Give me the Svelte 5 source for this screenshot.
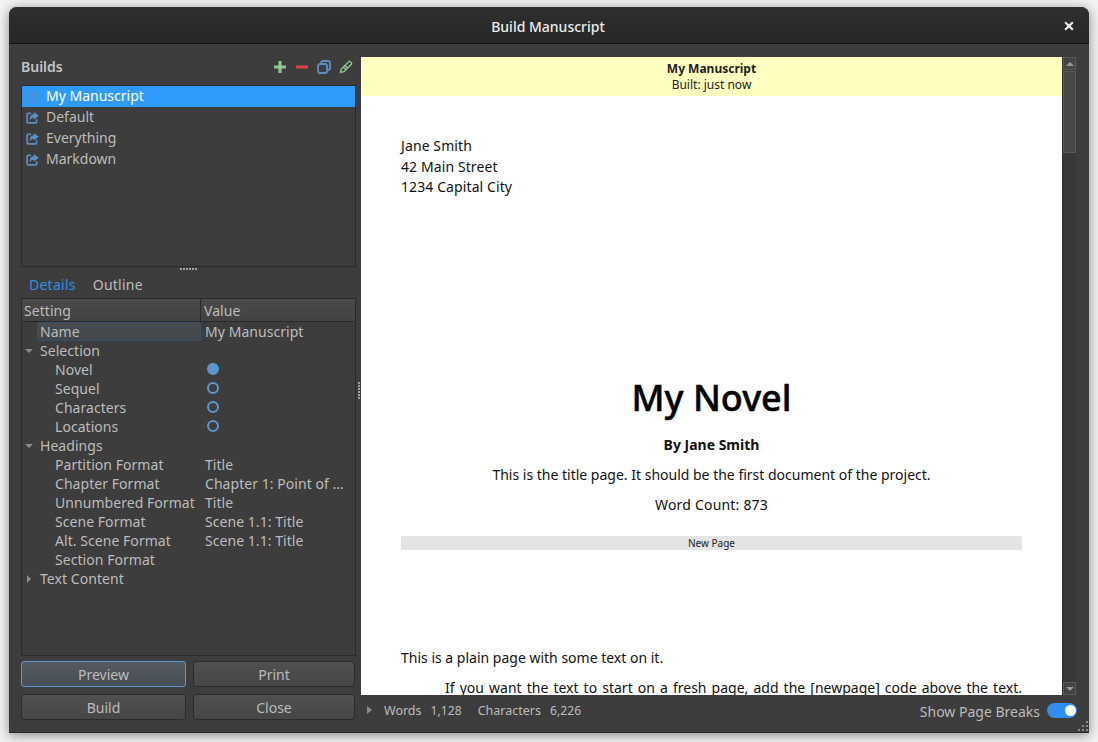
<script>
  let builds = ['My Manuscript', 'Default', 'Everything', 'Markdown'];
  let selected = 'My Manuscript';

  let settings = [
    { kind: 'name', label: 'Name', value: 'My Manuscript' },
    { kind: 'open', label: 'Selection' },
    { kind: 'radio', label: 'Novel', on: true },
    { kind: 'radio', label: 'Sequel' },
    { kind: 'radio', label: 'Characters' },
    { kind: 'radio', label: 'Locations' },
    { kind: 'open', label: 'Headings' },
    { kind: 'value', label: 'Partition Format', value: 'Title' },
    { kind: 'value', label: 'Chapter Format', value: 'Chapter 1: Point of …' },
    { kind: 'value', label: 'Unnumbered Format', value: 'Title' },
    { kind: 'value', label: 'Scene Format', value: 'Scene 1.1: Title' },
    { kind: 'value', label: 'Alt. Scene Format', value: 'Scene 1.1: Title' },
    { kind: 'value', label: 'Section Format', value: '' },
    { kind: 'closed', label: 'Text Content' }
  ];
</script>

<div class="window">
  <header class="titlebar">
    <span class="title">Build Manuscript</span>
    <svg class="close" width="10" height="10" viewBox="0 0 10 10" aria-label="Close">
      <path d="M1.2 1.2 8.8 8.8M8.8 1.2 1.2 8.8" stroke="#f0f0f0" stroke-width="2.2" fill="none" />
    </svg>
  </header>

  <div class="content">
    <aside class="left">
      <div class="builds-head">
        <span class="builds-title">Builds</span>
        <div class="tools">
          <svg width="14" height="14" viewBox="0 0 14 14"><path d="M7 1v12M1 7h12" stroke="#93c98f" stroke-width="3" fill="none" /></svg>
          <svg width="14" height="14" viewBox="0 0 14 14"><path d="M1 7h12" stroke="#d9434a" stroke-width="3" fill="none" /></svg>
          <svg width="14" height="14" viewBox="0 0 14 14" fill="none" stroke="#5a8fc4" stroke-width="1.8">
            <rect x="1" y="4" width="9" height="9" rx="2" />
            <path d="M4 3.6V2.8A1.800 1.800 0 0 1 5.800 1h5.400A1.800 1.800 0 0 1 13 2.800v5.400A1.800 1.800 0 0 1 11.200 10h-1" />
          </svg>
          <svg width="14" height="14" viewBox="0 0 14 14" fill="none" stroke="#93c98f" stroke-width="1.300">
            <path d="M1.500 12.500 2.300 9 9.800 1.600a1 1 0 0 1 1.400 0l1.200 1.200a1 1 0 0 1 0 1.400L5 11.700Z" />
            <path d="M4.300 7 7 9.700M6 5.300 8.700 8" />
          </svg>
        </div>
      </div>

      <ul class="build-list">
        {#each builds as build}
          <li class:sel={build === selected}>
            <svg class="build-icon" width="13" height="13" viewBox="0 0 14 14">
              <path d="M5.500 2.500H2.200a1 1 0 0 0-1 1v8.300a1 1 0 0 0 1 1h8.300a1 1 0 0 0 1-1V9" fill="none" stroke="currentColor" stroke-width="1.800" />
              <path d="M8.500 1 13.800 5.200 8.500 9.400V7.200C6.500 7.200 5 8 3.800 10.500 3.800 6.500 5.500 3.500 8.500 3.200Z" fill="currentColor" />
            </svg>
            <span class="build-name">{build}</span>
          </li>
        {/each}
      </ul>

      <div class="hsplit"></div>

      <div class="tabs">
        <span class="tab active">Details</span>
        <span class="tab">Outline</span>
      </div>

      <div class="tree">
        <div class="tree-head">
          <span class="col-a">Setting</span>
          <span class="col-b">Value</span>
        </div>
        {#each settings as row}
          <div class="row">
            {#if row.kind === 'name'}
              <span class="name-cell">{row.label}</span>
              <span class="val">{row.value}</span>
            {:else if row.kind === 'open' || row.kind === 'closed'}
              <span class="arrow {row.kind}"></span>
              <span class="group">{row.label}</span>
            {:else}
              <span class="leaf">{row.label}</span>
              {#if row.kind === 'radio'}
                <span class="radio" class:on={row.on}></span>
              {:else}
                <span class="val">{row.value}</span>
              {/if}
            {/if}
          </div>
        {/each}
      </div>

      <div class="buttons">
        <button class="focus">Preview</button>
        <button>Print</button>
        <button>Build</button>
        <button>Close</button>
      </div>
    </aside>

    <div class="vsplit"></div>

    <main class="right">
      <div class="viewer">
        <div class="page">
          <div class="banner">
            <b>My Manuscript</b>
            <span>Built: just now</span>
          </div>
          <div class="doc">
            <p class="address">Jane Smith<br />42 Main Street<br />1234 Capital City</p>
            <h1>My Novel</h1>
            <p class="center author">By Jane Smith</p>
            <p class="center intro">This is the title page. It should be the first document of the project.</p>
            <p class="center count">Word Count: 873</p>
            <div class="newpage">New Page</div>
            <p class="plain">This is a plain page with some text on it.</p>
            <p class="indented">If you want the text to start on a fresh page, add the [newpage] code above the text.</p>
          </div>
        </div>
        <div class="scrollbar">
          <div class="sb-btn"><span class="up"></span></div>
          <div class="sb-track"><div class="sb-thumb"></div></div>
          <div class="sb-btn"><span class="down"></span></div>
        </div>
      </div>

      <footer class="status">
        <span class="status-arrow"></span>
        <span class="st-label">Words</span>
        <span class="st-num">1,128</span>
        <span class="st-label second">Characters</span>
        <span class="st-num">6,226</span>
        <span class="breaks">Show Page Breaks</span>
        <span class="switch"><span class="knob"></span></span>
      </footer>
    </main>
  </div>

  <svg class="grip" width="14" height="14" viewBox="0 0 14 14" fill="#8a8a8a">
    <rect x="11" y="2" width="2" height="2" />
    <rect x="7" y="6" width="2" height="2" /><rect x="11" y="6" width="2" height="2" />
    <rect x="3" y="10" width="2" height="2" /><rect x="7" y="10" width="2" height="2" /><rect x="11" y="10" width="2" height="2" />
  </svg>
</div>

<style>
  :global(body) {
    background: #f2f2f2;
    font-family: "Noto Sans", sans-serif;
    overflow: hidden;
    height: 742px;
  }

  .window {
    position: relative;
    box-sizing: border-box;
    width: 1080px;
    height: 726px;
    margin: 7px 0 0 9px;
    border-radius: 8px 8px 0 0;
    background: #3d3d3d;
    box-shadow: 0 2px 12px rgba(0, 0, 0, 0.45), inset 0 -1px #2a2a2a;
    display: flex;
    flex-direction: column;
    color: #bcbcbc;
    font-size: 14px;
  }

  .titlebar {
    height: 37px;
    flex: none;
    box-sizing: border-box;
    padding: 2px 2px 0 0;
    border-radius: 8px 8px 0 0;
    border-bottom: 1px solid #111;
    background: linear-gradient(#2f2f2f, #272727);
    display: flex;
    align-items: center;
    justify-content: center;
    position: relative;
  }
  .title {
    color: #ececec;
    font-size: 14px;
    font-weight: 500;
  }
  .close {
    position: absolute;
    right: 15px;
    top: 14px;
  }

  .content {
    flex: 1;
    display: flex;
    min-height: 0;
    padding-left: 12px;
    padding-right: 12px;
  }

  .left {
    width: 335px;
    flex: none;
    display: flex;
    flex-direction: column;
  }

  .builds-head {
    height: 41px;
    flex: none;
    box-sizing: border-box;
    padding-top: 3px;
    display: flex;
    align-items: center;
    justify-content: space-between;
  }
  .builds-title {
    font-weight: 600;
    font-size: 14px;
    color: #c4c4c4;
  }
  .tools {
    display: flex;
    gap: 8px;
    padding-right: 3px;
    padding-top: 1px;
  }

  .build-list {
    list-style: none;
    margin: 0;
    padding: 0;
    height: 182px;
    flex: none;
    box-sizing: border-box;
    border: 1px solid #2a2a2a;
  }
  .build-list li {
    height: 21px;
    display: flex;
    align-items: center;
    gap: 7px;
    padding-left: 4px;
    color: #bcbcbc;
  }
  .build-list li.sel {
    background: #2e9afa;
    color: #fff;
  }
  .build-name {
    padding-bottom: 2px;
  }
  .build-icon {
    color: #5a8fc4;
    flex: none;
    margin-bottom: 1px;
  }
  .sel .build-icon {
    color: #4d8fd0;
  }

  .hsplit {
    height: 2px;
    width: 17px;
    flex: none;
    margin: 1px 0 4px;
    align-self: center;
    background-image: linear-gradient(90deg, #a0a0a0 2px, transparent 2px);
    background-size: 3px 2px;
  }

  .tabs {
    height: 24px;
    flex: none;
    box-sizing: border-box;
    padding: 0 0 4px 8px;
    display: flex;
    align-items: center;
    gap: 17px;
    letter-spacing: 0.25px;
  }
  .tab.active {
    color: #2e8fe6;
  }

  .tree {
    height: 358px;
    flex: none;
    box-sizing: border-box;
    border: 1px solid #2a2a2a;
    display: flex;
    flex-direction: column;
    letter-spacing: 0.05px;
  }
  .tree-head {
    height: 23px;
    flex: none;
    box-sizing: border-box;
    display: flex;
    background: linear-gradient(#4a4a4a, #424242);
    border-bottom: 1px solid #2a2a2a;
    line-height: 23px;
  }
  .col-a {
    width: 179px;
    flex: none;
    box-sizing: border-box;
    padding-left: 2px;
    border-right: 1px solid #2a2a2a;
  }
  .col-b {
    padding-left: 3px;
  }

  .row {
    height: 19px;
    flex: none;
    display: flex;
    align-items: center;
    white-space: nowrap;
  }
  .name-cell {
    width: 164px;
    height: 19px;
    margin-left: 15px;
    flex: none;
    box-sizing: border-box;
    padding-left: 2px;
    line-height: 18px;
    border: 1px solid #35506b;
    border-radius: 2px;
    background: linear-gradient(#4a4d50, #40464c);
  }
  .val {
    padding-left: 4px;
  }
  .arrow {
    width: 0;
    height: 0;
    flex: none;
    margin-left: 3px;
  }
  .arrow.open {
    border-left: 4px solid transparent;
    border-right: 4px solid transparent;
    border-top: 4px solid #8c8c8c;
    margin-right: 7px;
  }
  .arrow.closed {
    border-top: 4px solid transparent;
    border-bottom: 4px solid transparent;
    border-left: 4px solid #8c8c8c;
    margin-left: 5px;
    margin-right: 9px;
  }
  .leaf {
    width: 179px;
    flex: none;
    box-sizing: border-box;
    padding-left: 33px;
  }
  .radio {
    width: 12px;
    height: 12px;
    box-sizing: border-box;
    margin: 0 0 2px 6px;
    border: 2px solid #5b98d2;
    border-radius: 50%;
  }
  .radio.on {
    background: #5b98d2;
  }

  .buttons {
    margin-top: 5px;
    display: grid;
    grid-template-columns: 165px 162px;
    grid-auto-rows: 26px;
    column-gap: 7px;
    row-gap: 7px;
  }
  button {
    font: inherit;
    color: #bcbcbc;
    border: 1px solid #2c2c2c;
    border-radius: 3px;
    background: linear-gradient(#505050, #464646);
    padding: 0;
  }
  button.focus {
    border-color: #5b98d2;
    background: linear-gradient(#555a60, #474e56);
  }

  .vsplit {
    width: 5px;
    height: 17px;
    flex: none;
    margin-top: 338px;
    background-image: linear-gradient(#a0a0a0 2px, transparent 2px);
    background-size: 2px 3px;
    background-position: 2px 0;
    background-repeat: repeat-y;
  }

  .right {
    flex: 1;
    min-width: 0;
    display: flex;
    flex-direction: column;
    padding-top: 13px;
  }
  .viewer {
    height: 638px;
    flex: none;
    display: flex;
    margin-right: 1px;
  }
  .page {
    flex: 1;
    min-width: 0;
    background: #fff;
    color: #111;
    overflow: hidden;
  }
  .banner {
    height: 39px;
    background: #ffffc0;
    display: flex;
    flex-direction: column;
    align-items: center;
    font-size: 12px;
    line-height: 16px;
    padding-top: 4px;
    box-sizing: border-box;
    color: #222;
  }
  .doc {
    padding: 40px 40px 0 40px;
    font-size: 14px;
    line-height: 20.500px;
  }
  .doc p {
    margin: 0;
  }
  .address {
    height: 237px;
    letter-spacing: 0.1px;
  }
  h1 {
    margin: 0;
    font-size: 36px;
    font-weight: 500;
    -webkit-text-stroke: 0.5px #000;
    text-align: center;
    line-height: 50px;
    color: #000;
  }
  .center {
    text-align: center;
  }
  .doc .author {
    font-weight: 700;
    margin-top: 12px;
  }
  .doc .intro {
    margin-top: 9px;
  }
  .doc .count {
    margin-top: 10px;
    letter-spacing: 0.2px;
  }
  .newpage {
    margin-top: 20px;
    height: 14px;
    background: #e4e4e4;
    text-align: center;
    font-size: 10px;
    line-height: 14px;
    color: #222;
  }
  .doc .plain {
    margin-top: 98px;
  }
  .doc .indented {
    margin-top: 10px;
    text-indent: 44px;
    text-align: justify;
    text-align-last: justify;
  }

  .scrollbar {
    width: 14px;
    flex: none;
    display: flex;
    flex-direction: column;
    background: #383838;
    border-left: 1px solid #2c2c2c;
    box-sizing: border-box;
  }
  .sb-btn {
    height: 13px;
    flex: none;
    box-sizing: border-box;
    border: 1px solid #5a5a5a;
    background: #444;
    display: flex;
    align-items: center;
    justify-content: center;
  }
  .up {
    border-left: 4px solid transparent;
    border-right: 4px solid transparent;
    border-bottom: 4px solid #9a9a9a;
  }
  .down {
    border-left: 4px solid transparent;
    border-right: 4px solid transparent;
    border-top: 4px solid #9a9a9a;
  }
  .sb-track {
    flex: 1;
    padding-top: 1px;
  }
  .sb-thumb {
    height: 82px;
    box-sizing: border-box;
    border: 1px solid #5a5a5a;
    background: #484848;
  }

  .status {
    flex: 1;
    display: flex;
    align-items: center;
    font-size: 12px;
    padding-bottom: 8px;
  }
  .status-arrow {
    border-top: 4px solid transparent;
    border-bottom: 4px solid transparent;
    border-left: 5px solid #8c8c8c;
    margin-left: 6px;
    margin-right: 12px;
  }
  .st-label {
    font-size: 12.500px;
  }
  .st-label:first-of-type {
    letter-spacing: 0.15px;
  }
  .st-num {
    margin-left: 9px;
    letter-spacing: 0.1px;
  }
  .second {
    margin-left: 16px;
  }
  .breaks {
    margin-left: auto;
    font-size: 14px;
    margin-right: 7px;
    padding-top: 3px;
  }
  .switch {
    width: 30px;
    height: 15px;
    border-radius: 8px;
    background: #2e8ff0;
    display: flex;
    justify-content: flex-end;
    align-items: center;
    padding-right: 1px;
    box-sizing: border-box;
  }
  .knob {
    width: 11px;
    height: 11px;
    border-radius: 50%;
    background: #fff;
  }

  .grip {
    position: absolute;
    right: 0;
    bottom: 0;
  }
</style>
